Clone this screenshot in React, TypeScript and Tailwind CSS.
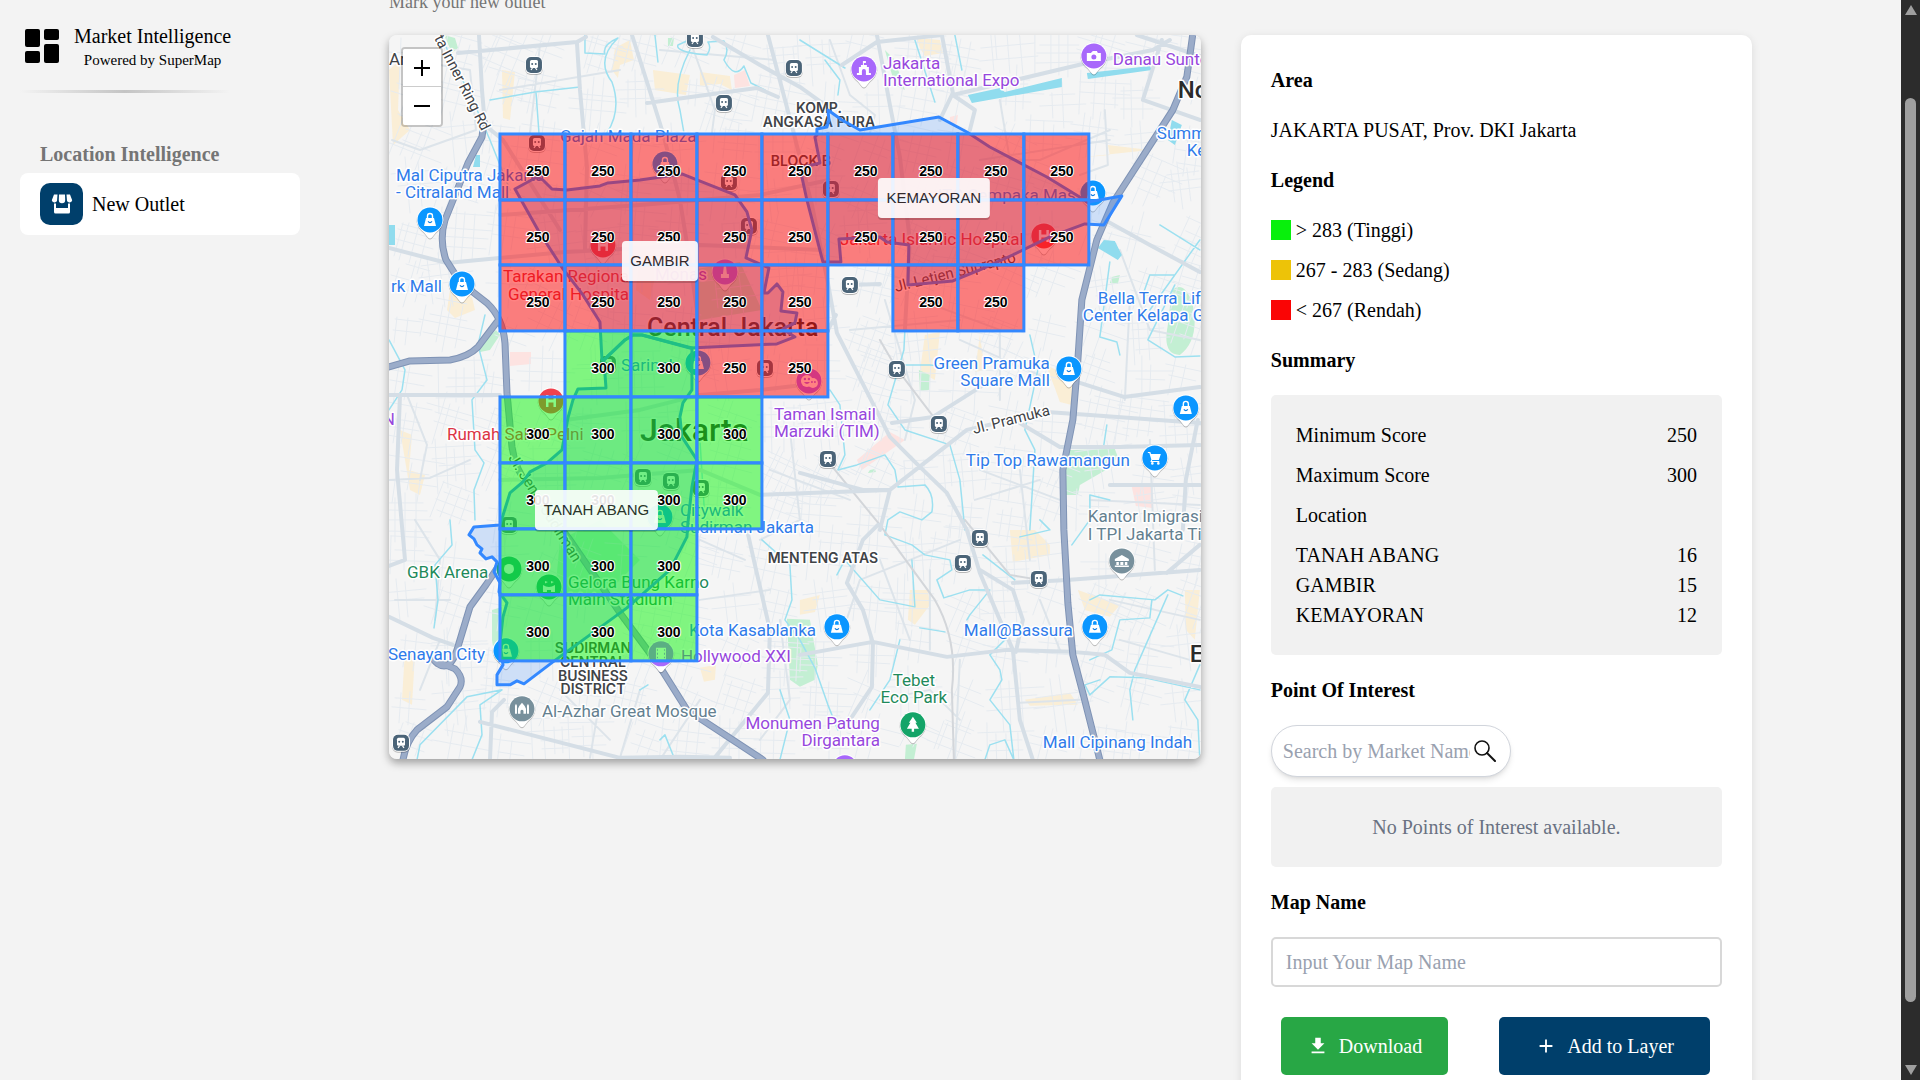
import type { ReactNode } from "react";
import { MdAdd, MdFileDownload } from "react-icons/md";

/* ---------- map data (map units) ---------- */

const columns = [500, 565, 631, 697, 762, 828, 893, 958, 1024, 1089];
const rows = [134, 200, 265, 331, 397, 463, 529, 595, 661];

type Run = { row: number; from: number; to: number; score: number };
const runs: Run[] = [
  { row: 0, from: 0, to: 8, score: 250 },
  { row: 1, from: 0, to: 8, score: 250 },
  { row: 2, from: 0, to: 4, score: 250 },
  { row: 2, from: 6, to: 7, score: 250 },
  { row: 3, from: 1, to: 2, score: 300 },
  { row: 3, from: 3, to: 4, score: 250 },
  { row: 4, from: 0, to: 3, score: 300 },
  { row: 5, from: 0, to: 3, score: 300 },
  { row: 6, from: 0, to: 2, score: 300 },
  { row: 7, from: 0, to: 2, score: 300 },
];
const cells = runs.flatMap((r) =>
  Array.from({ length: r.to - r.from + 1 }, (_, i) => ({ row: r.row, col: r.from + i, score: r.score })),
);

const districts = [
  "515,189 537,177 543,180 552,189 567,190 600,186 608,183 640,180 682,174 697,180 735,195 747,212 752,230 746,258 762,265 769,268 764,293 768,293 777,284 783,292 781,311 797,313 795,323 783,329 795,337 777,344 690,348 642,335 633,335 625,340 604,360 602,360 600,322 583,295 563,269 538,230",
  "604,360 606,388 578,389 573,400 568,418 562,450 547,463 530,472 523,482 510,493 500,525 474,527 469,535 474,539 477,545 482,549 480,553 486,559 492,557 497,562 494,572 500,583 499,592 507,603 503,617 500,643 503,665 497,675 497,685 510,685 517,681 524,684 553,662 627,608 670,570 687,537 688,523 692,487 697,460 682,437 680,417 683,403 692,390 692,348 642,335 633,335 625,340",
  "817,135 817,129 827,127 829,120 828,110 842,120 860,130 939,117 967,132 990,147 1047,177 1088,202 1122,196 1104,225 1085,224 1050,237 1013,255 980,270 953,281 908,285 909,245 887,242 880,237 839,239 841,262 823,262 807,200 800,168 820,163 815,137",
];

const tooltips = [
  { name: "GAMBIR", x: 622, y: 241, w: 76 },
  { name: "KEMAYORAN", x: 878, y: 178, w: 112 },
  { name: "TANAH ABANG", x: 535, y: 490, w: 123 },
];

const highways = [
  "M484 122L482 137L468 163L445 220Q439 240 446 260L460 282L487 303Q503 318 505 343L507 393L512 447Q515 470 530 488L570 540L620 613L660 667L687 710L763 760",
  "M389 367L410 361L450 360Q468 357 478 347L497 322",
  "M498 567L486 585L470 607L457 650Q450 672 438 664Q430 658 438 662L455 669Q464 678 460 687L447 707L417 730Q406 742 403 760",
  "M1193 34L1187 77L1173 110L1113 203L1097 240L1089 272L1082 300L1078 360L1073 420L1063 470L1064 530L1068 603L1073 655L1083 693L1100 760",
];

const mainRoads = [
  "M479 35L482 90L485 125L503 140L560 230",
  "M458 53L577 42L586 37",
  "M577 43L580 90L587 167L585 250",
  "M632 35L648 85L663 133L680 200L690 262L700 330",
  "M768 35L793 130L812 205L828 283L837 333L890 437L920 467L947 493L967 530L980 573L1000 620L1013 650L1020 720L1033 760",
  "M713 37L760 65L800 87L825 105",
  "M778 97L757 88L647 103",
  "M389 248L447 263L565 252L700 245L822 250",
  "M877 35L890 105L900 157L910 240L905 330",
  "M842 65L877 42L942 35L953 93L940 120",
  "M953 95L1087 63L1153 50L1170 40",
  "M953 95L975 110L970 130",
  "M1162 40L1143 100L1200 120",
  "M1137 35L1200 56",
  "M1105 220L1150 245L1200 272",
  "M500 215L640 205L760 195L829 180",
  "M565 420L640 410L700 395L760 390L820 383",
  "M500 480L600 478L700 470L760 495L890 490L967 430L1047 412L1090 415L1200 423",
  "M892 423L933 417L987 383L1010 378",
  "M1020 423L1060 447L1120 447L1200 445",
  "M1080 383L1124 397L1200 387",
  "M1110 485L1200 485",
  "M1183 530L1186 480L1198 420",
  "M800 473L863 490L890 490L880 530",
  "M800 655L873 642L947 657L1007 650L1072 652L1105 655L1130 673L1200 687",
  "M873 643L863 610L847 583L863 540L878 525",
  "M873 645L872 687L850 720",
  "M1013 583L1067 580L1200 570",
  "M980 570L1013 590L1023 620L1016 652",
  "M1167 573L1200 545",
  "M746 525L755 565L770 630L768 693L713 760",
  "M389 617L433 638L453 645",
  "M389 395L457 395L500 395",
  "M400 395L397 470L405 560L389 566",
  "M490 760L492 712L504 700",
  "M480 722L620 758L680 757L730 758",
  "M836 315L828 330M850 285L880 284",
];

const minorRoads = [
  "M389 480L430 478L470 460",
  "M407 395L427 445L420 480",
  "M410 60L470 70L476 130L420 150L392 140",
  "M500 90L620 70M540 45L530 133",
  "M690 40L715 110L712 133M660 50L775 60",
  "M850 95L875 115L870 133M830 40L850 95",
  "M1000 100L1010 160L1040 160L1110 130",
  "M1105 110L1108 165L1080 175M980 160L1110 140",
  "M1120 250L1150 330L1200 340M1130 300L1125 400",
  "M920 300L1000 330L1000 400M850 330L960 320",
  "M960 340L1050 380M885 300L915 400L905 440",
  "M1020 470L1030 560M980 470L1060 500M975 500L1040 480",
  "M1090 500L1200 505M1150 440L1155 570",
  "M790 430L800 520L760 540M770 470L850 500",
  "M880 560L910 640M840 640L860 580L960 540",
  "M930 570L930 650M960 660L955 760M1020 703L1080 700",
  "M1040 600L1060 650M1110 600L1200 620M1120 640L1190 660",
  "M600 700L590 758M560 690L610 740M700 700L660 760",
  "M640 690L620 758M780 620L790 700L760 740",
  "M415 520L440 560L435 620M395 600L450 600M420 690L440 640",
  "M700 540L745 560M700 600L770 590M880 700L930 690L960 720",
];

const railways = [
  "M826 459L880 525L935 600Q958 640 952 690L954 760",
  "M897 369L939 424M880 340L897 369",
  "M965 520L1010 575L1040 580",
];

const rivers = [
  "M440 35L475 105L490 140L510 190",
  "M585 35L585 53L605 54Q602 45 618 38",
  "M618 38Q595 60 612 82Q622 110 607 133",
  "M655 35L658 62M700 35L678 45Q675 52 707 55Q712 48 708 42L724 41Q730 50 724 60Q735 80 744 66L751 83L765 90",
  "M490 100L535 92L580 87M536 92L539 133",
  "M690 50Q672 85 680 110L684 133M825 60L840 80L838 95",
  "M800 40L845 68M915 40L935 102M955 35L962 70",
  "M1200 240L1150 310M1143 295L1150 275L1175 275M1110 262L1100 337L1117 342L1120 355",
  "M1175 285L1148 340L1175 357L1200 356",
  "M389 340L405 370L402 390L389 410",
  "M485 315L478 345L487 380L472 400L475 450L484 463L474 490L475 520",
  "M450 520L452 545L435 565L438 600L434 628",
  "M502 690L467 697L420 745L417 760M502 690L480 705L482 735L472 760",
  "M905 330L904 350L888 405L905 430L950 445L960 480L965 530",
  "M904 365L930 365L950 367M1030 335L1038 370L1025 430L1035 450L1030 530",
  "M830 390L840 405L845 455L838 470L857 465L885 455L895 470L898 487L925 485Q935 495 932 512L922 520L900 512L888 520L885 535L912 545L925 555L950 560L952 570L937 580L944 598L970 590L990 590L970 615L967 620",
  "M762 540L790 565L792 600L785 620L800 640L815 668L828 705L838 730",
  "M837 575L845 560L880 600L915 607L912 560M700 440L705 520",
  "M983 555L1015 580M1040 520L1050 530L1020 537M1005 640L990 655L1000 670L1002 680L990 700L1010 725L1014 760L1005 740L990 745L985 760",
  "M1090 600L1100 595L1155 600L1168 590L1183 596M1152 600L1150 618L1120 620L1112 650L1090 660",
  "M1168 595L1135 670L1130 690L1133 720M1100 680L1085 685L1090 695L1110 677L1145 678L1200 690",
  "M1200 665L1185 700L1198 720L1200 760M1110 500L1090 495L1090 520L1072 545",
  "M920 628L945 632M900 640L890 680L870 710M640 690L648 685M660 740L665 735L675 760",
  "M1107 425L1104 445M1200 250L1160 225M780 690L790 720L780 760",
];

const parks = [
  "M444 35L455 38L458 48L452 53Z",
  "M668 38L674 38L673 46L668 46Z",
  "M496 330L500 335L490 350L480 352L480 345Z",
  "M919 370L930 375L929 390L920 391Z",
  "M1112 277L1120 275L1118 284L1110 283Z",
  "M1172 290Q1185 280 1193 305Q1200 340 1180 355Q1162 355 1168 325Z",
  "M1070 450L1115 449L1118 457L1106 470L1080 485L1078 495L1065 495L1064 470Z",
  "M787 619L810 620L818 665L815 680L800 687L790 680Z",
  "M492 610L502 607L500 650L495 660L492 640Z",
  "M906 745L917 744L914 760L905 760Z",
  "M885 50L895 60L905 90L895 85Z",
  "M690 270L740 262L762 310L700 320Z",
  "M560 540L600 520L640 560L600 600L555 595Z",
  "M870 470L875 469L876 472L868 473Z",
];

const lakes = [
  "M968 95L1000 88L1005 92L1062 78L1062 87L972 103Z",
  "M1087 73L1150 66L1152 70L1088 79Z",
  "M389 225L395 225L395 245L389 245Z",
  "M476 155L480 155L480 167L473 167Z",
  "M1104 240L1115 241L1122 255L1118 260L1098 248Z",
  "M1172 120L1182 125L1175 145L1168 140Z",
];

const sands = [
  "M389 70L400 60L398 110L410 130L393 145Z",
  "M615 48L630 40L634 60L620 65L618 78L612 70Z",
  "M653 70L690 75L686 95L655 90Z",
  "M700 72L730 76L732 90L720 84L700 86Z",
  "M502 70L515 72L510 120L503 118Z",
  "M917 38L940 40L943 53L925 56L920 48Z",
  "M450 290L472 297L475 310L455 318L447 310Z",
  "M400 430L412 435L409 470L425 475L420 495L410 490Z",
  "M1046 365L1078 380L1072 405L1060 402L1055 388Z",
  "M925 335L940 332L935 380L920 372Z",
  "M1010 530L1035 530L1050 545L1050 555L1013 562Z",
  "M910 590L928 590L930 605L915 625L908 620Z",
  "M1025 700L1070 693L1078 705L1030 706Z",
  "M405 650L415 655L412 705L402 700Z",
  "M980 335L985 370L975 372Z",
  "M1078 590L1120 605L1110 617L1085 610Z",
  "M1185 590L1200 590L1195 640L1186 630Z",
  "M1150 150L1108 145L1110 155L1075 158Z",
  "M700 668L716 665L715 680L704 682Z",
  "M800 600L820 595L815 612L800 615Z",
  "M640 250L660 255L650 300L636 290Z",
];

const blushes = [
  "M734 75L745 70L750 86L735 88Z",
  "M857 460L890 432L905 440L862 470Z",
  "M1132 487L1152 487L1153 508L1136 506Z",
  "M510 352L531 352L531 364L510 366Z",
  "M950 117L958 115L957 124L950 125Z",
];

/* Small street blocks scattered over the base map from a fixed seed. */
function streetBlocks() {
  let seed = 7;
  const rand = () => {
    seed = (seed * 16807) % 2147483647;
    return seed / 2147483647;
  };
  const parts: string[] = [];
  for (let gy = 45; gy < 770; gy += 46) {
    for (let gx = 400; gx < 1210; gx += 46) {
      const cx = gx + rand() * 20;
      const cy = gy + rand() * 20;
      const a = rand() * 0.6 - 0.15;
      const c = Math.cos(a);
      const s = Math.sin(a);
      const n = 2 + Math.floor(rand() * 3);
      for (let i = 0; i < n; i += 1) {
        const o = (i - n / 2) * (7 + rand() * 6);
        const l = 12 + rand() * 18;
        parts.push(`M${(cx - l * c - o * s).toFixed(0)} ${(cy - l * s + o * c).toFixed(0)}L${(cx + l * c - o * s).toFixed(0)} ${(cy + l * s + o * c).toFixed(0)}`);
        parts.push(`M${(cx + o * c + l * s).toFixed(0)} ${(cy + o * s - l * c).toFixed(0)}L${(cx + o * c - l * s).toFixed(0)} ${(cy + o * s + l * c).toFixed(0)}`);
      }
    }
  }
  return parts.join("");
}
const streets = streetBlocks();

const BLUE = "#2f7bea";
const PURPLE = "#9747dd";
const GREEN = "#1f8a5b";
const RED = "#dc3545";
const SLATE = "#64808f";
const DARK = "#3f4347";

type Label = { t: string; x: number; y: number; c: string; end?: boolean; mid?: boolean };
const labels: Label[] = [
  { t: "Mal Ciputra Jakarta", x: 396, y: 181, c: BLUE },
  { t: "- Citraland Mall", x: 396, y: 198, c: BLUE },
  { t: "Gajah Mada Plaza", x: 560, y: 142, c: BLUE },
  { t: "Jakarta", x: 883, y: 69, c: PURPLE },
  { t: "International Expo", x: 883, y: 86, c: PURPLE },
  { t: "Danau Sunter", x: 1113, y: 65, c: PURPLE },
  { t: "Summarecon", x: 1157, y: 139, c: BLUE },
  { t: "Kelapa", x: 1187, y: 156, c: BLUE },
  { t: "ITC Cempaka Mas", x: 1076, y: 201, c: BLUE, end: true },
  { t: "Jakarta Islamic Hospital", x: 840, y: 245, c: RED },
  { t: "Tarakan Regional", x: 503, y: 282, c: RED },
  { t: "General Hospital", x: 508, y: 300, c: RED },
  { t: "Monas", x: 707, y: 280, c: PURPLE, end: true },
  { t: "Sarinah", x: 621, y: 371, c: BLUE },
  { t: "Rumah Sakit Pelni", x: 447, y: 440, c: RED },
  { t: "Taman Ismail", x: 774, y: 420, c: PURPLE },
  { t: "Marzuki (TIM)", x: 774, y: 437, c: PURPLE },
  { t: "Citywalk", x: 680, y: 516, c: BLUE },
  { t: "Sudirman Jakarta", x: 680, y: 533, c: BLUE },
  { t: "GBK Arena", x: 407, y: 578, c: GREEN },
  { t: "Gelora Bung Karno", x: 568, y: 588, c: GREEN },
  { t: "Main Stadium", x: 568, y: 605, c: GREEN },
  { t: "Senayan City", x: 388, y: 660, c: BLUE },
  { t: "Kota Kasablanka", x: 689, y: 636, c: BLUE },
  { t: "Hollywood XXI", x: 681, y: 662, c: PURPLE },
  { t: "Al-Azhar Great Mosque", x: 542, y: 717, c: SLATE },
  { t: "Monumen Patung", x: 880, y: 729, c: PURPLE, end: true },
  { t: "Dirgantara", x: 880, y: 746, c: PURPLE, end: true },
  { t: "Tebet", x: 914, y: 686, c: GREEN, mid: true },
  { t: "Eco Park", x: 914, y: 703, c: GREEN, mid: true },
  { t: "Mall@Bassura", x: 964, y: 636, c: BLUE },
  { t: "Mall Cipinang Indah", x: 1043, y: 748, c: BLUE },
  { t: "Kantor Imigrasi", x: 1088, y: 522, c: SLATE },
  { t: "I TPI Jakarta Timur", x: 1088, y: 540, c: SLATE },
  { t: "Tip Top Rawamangun", x: 966, y: 466, c: BLUE },
  { t: "Green Pramuka", x: 1050, y: 369, c: BLUE, end: true },
  { t: "Square Mall", x: 1050, y: 386, c: BLUE, end: true },
  { t: "Bella Terra Lifestyle", x: 1098, y: 304, c: BLUE },
  { t: "Center Kelapa Gading", x: 1083, y: 321, c: BLUE },
  { t: "rk Mall", x: 442, y: 292, c: BLUE, end: true },
  { t: "Ar", x: 389, y: 65, c: DARK },
  { t: "N", x: 395, y: 425, c: PURPLE, end: true },
];

const areas = [
  { t: "KOMP.", x: 819, y: 113 },
  { t: "ANGKASA PURA", x: 819, y: 127 },
  { t: "BLOCK B", x: 801, y: 166 },
  { t: "MENTENG ATAS", x: 823, y: 563 },
  { t: "SUDIRMAN", x: 593, y: 653 },
  { t: "CENTRAL", x: 593, y: 667 },
  { t: "BUSINESS", x: 593, y: 681 },
  { t: "DISTRICT", x: 593, y: 694 },
];

type Glyph = "bag" | "camera" | "castle" | "hospital" | "tree" | "mosque" | "bank" | "cart" | "film" | "dot" | "stadium" | "monument" | "palette";
const pins: { x: number; y: number; c: string; g: Glyph }[] = [
  { x: 430, y: 220, c: "#0a96ff", g: "bag" },
  { x: 462, y: 284, c: "#0a96ff", g: "bag" },
  { x: 665, y: 164, c: "#0a96ff", g: "bag" },
  { x: 864, y: 69, c: "#a868fb", g: "castle" },
  { x: 1094, y: 56, c: "#a868fb", g: "camera" },
  { x: 1093, y: 193, c: "#0a96ff", g: "bag" },
  { x: 603, y: 245, c: "#f0414d", g: "hospital" },
  { x: 1044, y: 236, c: "#f0414d", g: "hospital" },
  { x: 725, y: 272, c: "#a868fb", g: "monument" },
  { x: 698, y: 363, c: "#0a96ff", g: "bag" },
  { x: 551, y: 401, c: "#f0414d", g: "hospital" },
  { x: 809, y: 381, c: "#a868fb", g: "palette" },
  { x: 1069, y: 369, c: "#0a96ff", g: "bag" },
  { x: 1186, y: 408, c: "#0a96ff", g: "bag" },
  { x: 1155, y: 458, c: "#0a96ff", g: "cart" },
  { x: 660, y: 517, c: "#0a96ff", g: "bag" },
  { x: 509, y: 569, c: "#14a468", g: "dot" },
  { x: 549, y: 587, c: "#14a468", g: "stadium" },
  { x: 506, y: 651, c: "#0a96ff", g: "bag" },
  { x: 661, y: 654, c: "#a868fb", g: "film" },
  { x: 522, y: 709, c: "#78909c", g: "mosque" },
  { x: 837, y: 627, c: "#0a96ff", g: "bag" },
  { x: 1095, y: 627, c: "#0a96ff", g: "bag" },
  { x: 1122, y: 561, c: "#78909c", g: "bank" },
  { x: 913, y: 725, c: "#14a468", g: "tree" },
  { x: 845, y: 768, c: "#a868fb", g: "castle" },
];

const stations = [
  [534, 65], [724, 103], [695, 39], [794, 68], [537, 143], [729, 182], [831, 189], [850, 285],
  [897, 369], [939, 424], [828, 459], [980, 538], [963, 563], [1039, 579], [401, 743], [749, 226],
  [765, 368], [608, 364], [643, 477], [671, 481], [701, 488], [509, 525],
];

/* ---------- map drawing ---------- */

const glyphs: Record<Glyph, ReactNode> = {
  bag: (
    <>
      <path d="M-4 -2H4L6 6H-6Z" fill="#fff" />
      <path d="M-2.500 -2V-4A2.500 2.500 0 0 1 2.500 -4V-2" fill="none" stroke="#fff" strokeWidth={1.400} />
      <path d="M-2 1.500Q0 4 2 1.500" fill="none" stroke="#0a7be0" strokeWidth={1.200} />
    </>
  ),
  camera: (
    <>
      <path d="M-7 -3H-3L-1 -5H3L4 -3H7V5H-7Z" fill="#fff" />
      <circle cx={0} cy={1} r={2.500} fill="#a868fb" />
    </>
  ),
  castle: <path d="M-7 6V4H-5V-2H-3V-4H-1V-8H2V-6H0V-4H3V-2H5V4H7V6H2V2A2 2 0 0 0 -2 2V6Z" fill="#fff" />,
  hospital: <path d="M-5 -6H-2.500V-1.500H2.500V-6H5V6H2.500V1.500H-2.500V6H-5Z" fill="#fff" />,
  tree: <path d="M0 -8L4 -2H2.500L6 4H1.200V7H-1.200V4H-6L-2.500 -2H-4Z" fill="#fff" />,
  mosque: <path d="M-7 5V-3L-6 -5L-5 -3V5ZM7 5V-3L6 -5L5 -3V5ZM-4 5V0Q-3 -3 0 -6Q3 -3 4 0V5H1.500V2Q0 0 -1.500 2V5Z" fill="#fff" />,
  bank: <path d="M-7 -2L0 -6L7 -2V0H-7ZM-5.500 1H-3V4H-5.500ZM-1.500 1H1.500V4H-1.500ZM3 1H5.500V4H3ZM-7 4.500H7V6H-7Z" fill="#fff" />,
  cart: (
    <>
      <path d="M-7 -6H-4.500L-3.800 -4H6L4 2H-2.500L-3 3H4.500V4H-4.500L-3.500 1.500L-5.500 -4.800H-7Z" fill="#fff" />
      <circle cx={-2.500} cy={5.500} r={1.300} fill="#fff" />
      <circle cx={3.500} cy={5.500} r={1.300} fill="#fff" />
    </>
  ),
  film: <path d="M-5 -6H5V6H-5ZM-4 -4.500V-3H-3V-4.500ZM-4 -1V1H-3V-1ZM-4 3V4.500H-3V3ZM3 -4.500V-3H4V-4.500ZM3 -1V1H4V-1ZM3 3V4.500H4V3Z" fill="#fff" fillRule="evenodd" />,
  dot: <circle r={5} fill="#fff" />,
  stadium: <path d="M-6 -2Q0 2 6 -2V5H2V3H-2V5H-6ZM-4 -6L-1 -5L-4 -3.500ZM2 -6L5 -5L2 -3.500Z" fill="#fff" />,
  monument: <path d="M-1 -7H1L2 2H4V6H-4V2H-2Z" fill="#fff" />,
  palette: (
    <>
      <circle cx={-2} cy={0} r={6} fill="#fff" />
      <circle cx={4} cy={2} r={5} fill="#fff" />
      <g fill="#a868fb">
        <circle cx={-4} cy={-2} r={1.200} />
        <circle cx={0} cy={-2} r={1.200} />
        <path d="M-5 1H1Q-2 5 -5 1Z" />
        <circle cx={3} cy={1} r={1} />
        <circle cx={6} cy={1} r={1} />
      </g>
    </>
  ),
};

function Pin({ x, y, c, g }: { x: number; y: number; c: string; g: Glyph }) {
  const drop = "M-13.500 0A13.500 13.500 0 1 1 13.500 0Q13 7 6 12.500L2 17.500Q0 19.500 -2 17.500L-6 12.500Q-13 7 -13.500 0Z";
  return (
    <g transform={`translate(${x} ${y})`}>
      <path d={drop} transform="translate(0 1)" fill="#000" opacity={0.250} />
      <path d={drop} fill="#fff" />
      <circle r={12.500} fill={c} />
      {glyphs[g]}
    </g>
  );
}

function Station({ x, y }: { x: number; y: number }) {
  return (
    <g transform={`translate(${x} ${y})`}>
      <rect x={-9} y={-8} width={18} height={18} rx={6} fill="#000" opacity={0.250} />
      <rect x={-9} y={-9} width={18} height={18} rx={6} fill="#fff" />
      <rect x={-8} y={-8} width={16} height={16} rx={5} fill="#4b6478" />
      <rect x={-4} y={-5} width={8} height={8} rx={1.500} fill="#fff" />
      <path d="M-3 5L-1.500 3M3 5L1.500 3" stroke="#fff" strokeWidth={1.200} />
      <circle cx={-1.800} cy={-1} r={1} fill="#4b6478" />
      <circle cx={1.800} cy={-1} r={1} fill="#4b6478" />
    </g>
  );
}

function Shapes({ list, fill }: { list: string[]; fill: string }) {
  return <path d={list.join("")} fill={fill} />;
}

function Lines({ list, stroke, width }: { list: string[]; stroke: string; width: number }) {
  return <path d={list.join("")} fill="none" stroke={stroke} strokeWidth={width} strokeLinejoin="round" strokeLinecap="round" />;
}

function BaseMap() {
  return (
    <>
      <rect x={389} y={35} width={812} height={724} fill="#f5f5f5" />
      <Shapes list={sands} fill="#faeed6" />
      <Shapes list={blushes} fill="#fde3e1" />
      <Shapes list={parks} fill="#c3efd3" />
      <Lines list={[streets]} stroke="#e6ebf0" width={1} />
      <Lines list={minorRoads} stroke="#dde4ea" width={2} />
      <Lines list={rivers} stroke="#9ce0f0" width={1.500} />
      <Shapes list={lakes} fill="#90dcee" />
      <Lines list={railways} stroke="#d3d6da" width={2} />
      <Lines list={mainRoads} stroke="#d5dee6" width={4} />
      <Lines list={highways} stroke="#7f93b5" width={7} />
      <Lines list={highways} stroke="#9bacc9" width={5} />
      {stations.map(([x, y]) => (
        <Station key={`${x}-${y}`} x={x} y={y} />
      ))}
      {pins.map((p) => (
        <Pin key={`${p.x}-${p.y}`} {...p} />
      ))}
      <g className="font-['Roboto',sans-serif] font-normal" stroke="#fff" strokeWidth={3} strokeLinejoin="round" style={{ paintOrder: "stroke" }}>
        <g fontSize={17}>
          {labels.map((l) => (
            <text key={l.t} x={l.x} y={l.y} fill={l.c} textAnchor={l.end ? "end" : l.mid ? "middle" : "start"}>
              {l.t}
            </text>
          ))}
        </g>
        <g className="font-['Inter',sans-serif] font-semibold" fontSize={14} fill={DARK} textAnchor="middle">
          {areas.map((a) => (
            <text key={a.t} x={a.x} y={a.y}>
              {a.t}
            </text>
          ))}
        </g>
        <g fill="#2b2b2b" className="font-medium">
          <text x={647} y={336} fontSize={25}>Central Jakarta</text>
          <text x={640} y={441} fontSize={32}>Jakarta</text>
          <text x={1178} y={98} fontSize={24}>North</text>
          <text x={1190} y={662} fontSize={24}>East</text>
        </g>
        <g fill={DARK} fontSize={15}>
          <text transform="translate(434 38) rotate(63)">ta Inner Ring Rd</text>
          <text transform="translate(974 434) rotate(-14)">Jl. Pramuka</text>
          <text transform="translate(896 292) rotate(-14)">Jl. Letjen Suprapto</text>
          <text transform="translate(508 458) rotate(58)">Jl. Jend. Sudirman</text>
        </g>
      </g>
    </>
  );
}

function OutletMap() {
  return (
    <div className="relative aspect-[812/724] w-full overflow-hidden rounded-lg shadow-[0_4px_8px_rgba(0,0,0,0.35)]">
      <svg viewBox="389 35 812 724" className="block h-full w-full" role="img" aria-label="Outlet score map of Jakarta Pusat">
        <BaseMap />
        {districts.map((d) => (
          <polygon key={d} points={d} fill="#3388ff" fillOpacity={0.200} stroke="#3388ff" strokeWidth={3} strokeLinejoin="round" />
        ))}
        {cells.map(({ row, col, score }) => (
          <rect
            key={`${row}-${col}`}
            x={columns[col]}
            y={rows[row]}
            width={columns[col + 1] - columns[col]}
            height={rows[row + 1] - rows[row]}
            fill={score > 283 ? "#0cf50c" : "#ff0505"}
            fillOpacity={0.500}
            stroke="#3388ff"
            strokeWidth={3}
          />
        ))}
        <g className="font-['Liberation_Sans',sans-serif] font-bold" fontSize={14} textAnchor="middle" stroke="#fff" strokeWidth={2} strokeLinejoin="round" style={{ paintOrder: "stroke" }}>
          {cells.map(({ row, col, score }) => (
            <text key={`${row}-${col}`} x={columns[col] + 38} y={rows[row] + 42}>
              {score}
            </text>
          ))}
        </g>
        {tooltips.map((t) => (
          <g key={t.name} opacity={0.900}>
            <rect x={t.x} y={t.y + 1} width={t.w} height={41} rx={4} fill="#000" opacity={0.200} />
            <rect x={t.x} y={t.y} width={t.w} height={40} rx={4} fill="#fff" />
            <text x={t.x + t.w / 2} y={t.y + 25} fontSize={15} fill="#222" textAnchor="middle" className="font-['Liberation_Sans',sans-serif]">
              {t.name}
            </text>
          </g>
        ))}
      </svg>
      <div className="absolute left-3 top-3 flex flex-col overflow-hidden rounded border-2 border-black/20 bg-clip-padding">
        <button type="button" aria-label="Zoom in" className="flex h-[38px] w-[38px] items-center justify-center border-b border-[#ccc] bg-white">
          <svg viewBox="0 0 16 16" className="h-4 w-4" stroke="#000" strokeWidth={2}>
            <path d="M0 8H16M8 0V16" />
          </svg>
        </button>
        <button type="button" aria-label="Zoom out" className="flex h-[38px] w-[38px] items-center justify-center bg-white">
          <svg viewBox="0 0 16 16" className="h-4 w-4" stroke="#000" strokeWidth={2}>
            <path d="M0 8H16" />
          </svg>
        </button>
      </div>
    </div>
  );
}

/* ---------- sidebar ---------- */

function Sidebar() {
  return (
    <aside className="w-[320px] shrink-0 px-5 pt-[22px]">
      <div className="flex items-center gap-[15px] pl-[5px]">
        <svg viewBox="0 0 34 34" className="h-[34px] w-[34px]" aria-hidden="true">
          <rect x={0} y={0} width={15} height={18} rx={2} />
          <rect x={19} y={0} width={15} height={11} rx={2} />
          <rect x={0} y={22} width={15} height={12} rx={2} />
          <rect x={19} y={15} width={15} height={19} rx={2} />
        </svg>
        <div className="text-center">
          <p className="text-[20px] leading-7">Market Intelligence</p>
          <p className="text-[15px] leading-5">Powered by SuperMap</p>
        </div>
      </div>
      <div className="mt-5 h-[3px] w-[210px] bg-linear-to-r from-transparent via-[#c4c4c4] to-transparent" />
      <h2 className="mt-[46px] pl-5 text-[20px] leading-[30px] font-bold text-[#757575]">Location Intelligence</h2>
      <nav className="mt-1">
        <a href="#new-outlet" className="flex h-[62px] items-center gap-[9px] rounded-lg bg-white px-5">
          <span className="flex h-[42px] w-[43px] items-center justify-center rounded-[10px] bg-[#003f6b]">
            <svg viewBox="0 0 22 20" className="h-5 w-[22px]" fill="#fff" aria-hidden="true">
              <path d="M3 0.500H6.500L6 7A2.800 2.800 0 0 1 0.800 6.200ZM8 0.500H14L14.200 6A3.200 3.200 0 0 1 7.800 6ZM15.500 0.500H19L21.200 6.200A2.800 2.800 0 0 1 16 7Z" />
              <path d="M3 9.500H5V14H17V9.500H19V18A1.500 1.500 0 0 1 17.500 19.500H4.500A1.500 1.500 0 0 1 3 18Z" />
            </svg>
          </span>
          <span className="text-[20px] leading-[30px]">New Outlet</span>
        </a>
      </nav>
    </aside>
  );
}

/* ---------- detail card ---------- */

const legend = [
  { label: "> 283 (Tinggi)", swatch: "bg-[#08f00c]" },
  { label: "267 - 283 (Sedang)", swatch: "bg-[#edc308]" },
  { label: "< 267 (Rendah)", swatch: "bg-[#fa0505]" },
];

const locations = [
  ["TANAH ABANG", 16],
  ["GAMBIR", 15],
  ["KEMAYORAN", 12],
];

function DetailCard() {
  return (
    <section className="flex flex-col gap-5 rounded-[10px] bg-white p-[30px] pb-10 shadow-[0_2px_8px_rgba(0,0,0,0.1)]">
      <h3 className="font-bold">Area</h3>
      <p>JAKARTA PUSAT, Prov. DKI Jakarta</p>
      <h3 className="font-bold">Legend</h3>
      <ul className="flex flex-col gap-2.5">
        {legend.map((l) => (
          <li key={l.label} className="flex items-center gap-[5px]">
            <span className={`h-5 w-5 ${l.swatch}`} />
            {l.label}
          </li>
        ))}
      </ul>
      <h3 className="font-bold">Summary</h3>
      <dl className="flex flex-col gap-2.5 rounded-[5px] bg-[#f1f1f1] p-[25px]">
        <div className="flex justify-between">
          <dt>Minimum Score</dt>
          <dd>250</dd>
        </div>
        <div className="flex justify-between">
          <dt>Maximum Score</dt>
          <dd>300</dd>
        </div>
        <dt>Location</dt>
        <div>
          {locations.map(([name, count]) => (
            <div key={name} className="flex justify-between">
              <dt>{name}</dt>
              <dd>{count}</dd>
            </div>
          ))}
        </div>
      </dl>
      <h3 className="font-bold">Point Of Interest</h3>
      <div className="flex flex-col gap-2.5">
        <div className="flex h-[52px] w-[240px] items-center rounded-full border border-gray-300 bg-white pr-[14px] pl-[11px] shadow-md">
          <input
            type="text"
            aria-label="Search by Market Name"
            placeholder="Search by Market Name"
            className="min-w-0 flex-1 bg-transparent outline-none placeholder:text-gray-400"
          />
          <button type="button" aria-label="Search" className="ml-1">
            <svg viewBox="0 0 22 22" className="h-[22px] w-[22px]" fill="none" stroke="#111" strokeWidth={1.600} strokeLinecap="round">
              <circle cx={8} cy={8} r={7} />
              <path d="M13 13L21 21" strokeWidth={2} />
            </svg>
          </button>
        </div>
        <p className="rounded-[5px] bg-[#f1f1f1] p-[25px] text-center text-gray-500">No Points of Interest available.</p>
      </div>
      <label htmlFor="map-name" className="font-bold">
        Map Name
      </label>
      <input
        id="map-name"
        type="text"
        placeholder="Input Your Map Name"
        className="h-[50px] w-full rounded-[5px] border-2 border-[#d8d8d8] px-[13px] outline-none placeholder:text-gray-400"
      />
      <div className="mt-2.5 flex justify-between pr-3 pl-2.5 text-white">
        <button type="button" className="flex h-[58px] items-center gap-2.5 rounded-[5px] bg-[#28a745] px-[26px]">
          <MdFileDownload className="h-[22px] w-[22px]" />
          Download
        </button>
        <button type="button" className="flex h-[58px] items-center gap-2.5 rounded-[5px] bg-[#003f6b] px-9">
          <MdAdd className="h-[22px] w-[22px]" />
          Add to Layer
        </button>
      </div>
    </section>
  );
}

function ScrollTrack() {
  return (
    <div className="flex w-[19px] shrink-0 flex-col items-center justify-between bg-[#2c2c2c] py-[5px]" aria-hidden="true">
      <svg viewBox="0 0 12 10" className="h-2.5 w-3" fill="#9f9f9f">
        <path d="M6 0L12 10H0Z" />
      </svg>
      <div className="mt-[83px] mb-[63px] w-[11px] flex-1 rounded-full bg-[#9f9f9f]" />
      <svg viewBox="0 0 12 10" className="h-2.5 w-3" fill="#9f9f9f">
        <path d="M6 10L12 0H0Z" />
      </svg>
    </div>
  );
}

export default function App() {
  return (
    <div className="flex h-screen overflow-hidden bg-[#f3f3f3] font-['Liberation_Serif',serif] text-black">
      <Sidebar />
      <main className="min-w-0 flex-1 overflow-hidden pr-[149px] pl-[69px] text-[20px] leading-[30px]">
        <p className="-mt-2.5 mb-[21px] text-lg leading-6 text-[#757575]">Mark your new outlet</p>
        <div className="grid grid-cols-[minmax(0,27fr)_minmax(0,17fr)] items-start gap-10">
          <OutletMap />
          <DetailCard />
        </div>
      </main>
      <ScrollTrack />
    </div>
  );
}
